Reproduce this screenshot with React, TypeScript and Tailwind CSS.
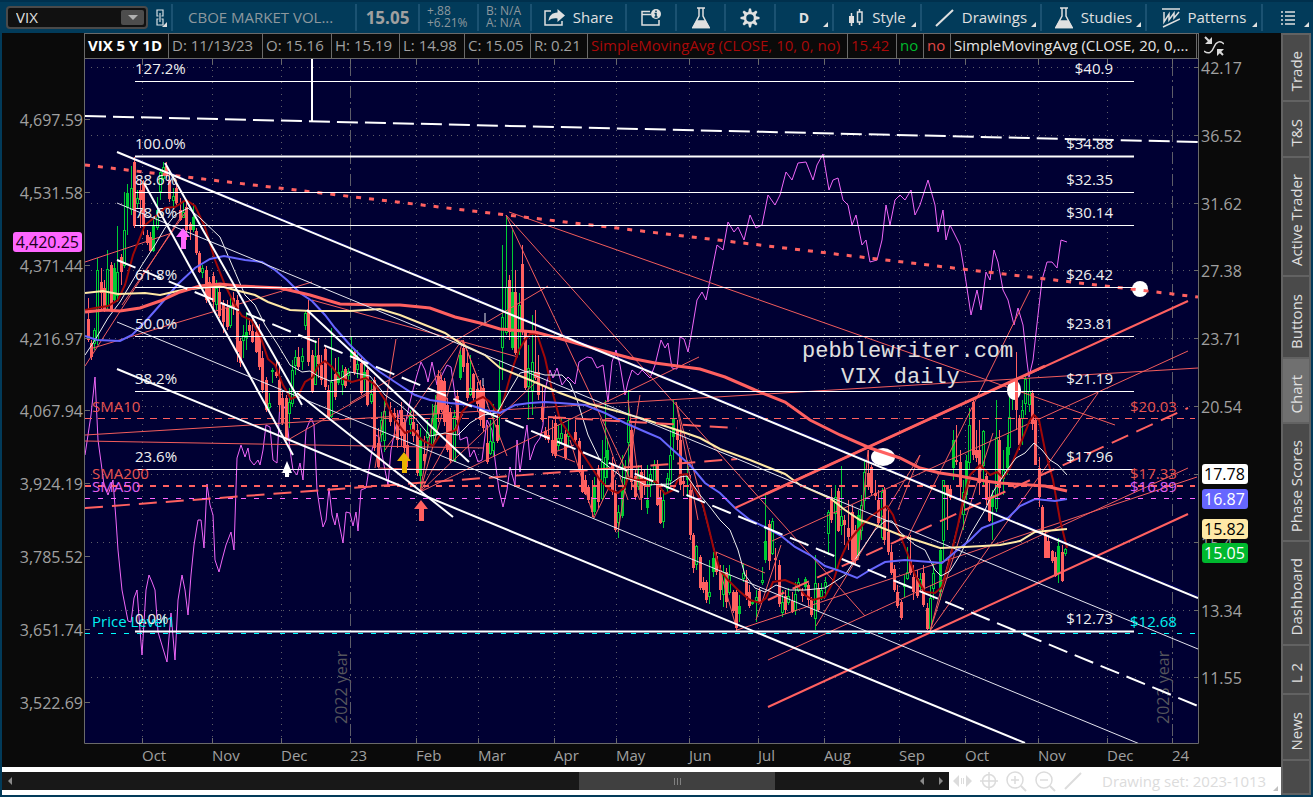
import { useState } from 'react'
import type { ReactNode } from 'react'
import clsx from 'clsx'

type Segment = [number, number, number, number]

const HEADER_CELLS = [
  { text: 'VIX 5 Y 1D', className: 'w-[84px] font-bold text-white' },
  { text: 'D: 11/13/23', className: 'w-[94px] text-[#a0a0a0]' },
  { text: 'O: 15.16', className: 'w-[69px] text-[#a0a0a0]' },
  { text: 'H: 15.19', className: 'w-[68px] text-[#a0a0a0]' },
  { text: 'L: 14.98', className: 'w-[65px] text-[#a0a0a0]' },
  { text: 'C: 15.05', className: 'w-[66px] text-[#a0a0a0]' },
  { text: 'R: 0.21', className: 'w-[57px] text-[#a0a0a0]' },
  { text: 'SimpleMovingAvg (CLOSE, 10, 0, no)', className: 'w-[260px] text-[#a90909]' },
  { text: '15.42', className: 'w-[49px] text-[#a90909]' },
  { text: 'no', className: 'w-[27px] text-[#00b82e]' },
  { text: 'no', className: 'w-[27px] text-[#e04848]' },
  { text: 'SimpleMovingAvg (CLOSE, 20, 0,...', className: 'w-[246px] text-[#e6e6e6]' },
]

const TABS = [
  { label: 'Trade', className: 'h-[65px]' },
  { label: 'T&S', className: 'h-[54px]' },
  { label: 'Active Trader', className: 'h-[117px]' },
  { label: 'Buttons', className: 'h-[80px]' },
  { label: 'Chart', className: 'h-[63px]' },
  { label: 'Phase Scores', className: 'h-[116px]' },
  { label: 'Dashboard', className: 'h-[102px]' },
  { label: 'L 2', className: 'h-[47px]' },
  { label: 'News', className: 'h-[64px]' },
]

const MONTHS: [number, string][] = [
  [142, 'Oct'], [212, 'Nov'], [281, 'Dec'], [350, '23'], [416, 'Feb'], [478, 'Mar'],
  [554, 'Apr'], [616, 'May'], [689, 'Jun'], [758, 'Jul'], [824, 'Aug'], [899, 'Sep'],
  [965, 'Oct'], [1038, 'Nov'], [1107, 'Dec'], [1172, '24'],
]

const LEFT_AXIS: [number, string][] = [
  [120, '4,697.59'], [193, '4,531.58'], [266, '4,371.44'], [339, '4,216.97'], [411, '4,067.94'],
  [484, '3,924.19'], [557, '3,785.52'], [630, '3,651.74'], [703, '3,522.69'],
]

const RIGHT_AXIS: [number, string][] = [
  [68, '42.17'], [136, '36.52'], [204, '31.62'], [271, '27.38'], [339, '23.71'], [407, '20.54'],
  [475, ''], [543, '15.4'], [611, '13.34'], [678, '11.55'],
]

const FIB_LEVELS: [number, string, string][] = [
  [81, '127.2%', '$40.9'], [156, '100.0%', '$34.88'], [192, '88.6%', '$32.35'],
  [225, '78.6%', '$30.14'], [287, '61.8%', '$26.42'], [336, '50.0%', '$23.81'],
  [391, '38.2%', '$21.19'], [469, '23.6%', '$17.96'], [631, '0.0%', '$12.73'],
]

const PRICE_BADGES = [
  { y: 464, text: '17.78', fill: '#ffffff', color: '#000000' },
  { y: 489, text: '16.87', fill: '#6666ff', color: '#ffffff' },
  { y: 519, text: '15.82', fill: '#ffe9a6', color: '#000000' },
  { y: 543, text: '15.05', fill: '#00b82e', color: '#ffffff' },
]

const THICK_WHITE: Segment[] = [
  [117, 152, 1198, 598], [117, 369, 1025, 743], [144, 183, 293, 455], [165, 163, 302, 405],
  [307, 310, 469, 462], [297, 393, 453, 517], [312, 59, 312, 121],
]

const THIN_WHITE: Segment[] = [
  [117, 203, 1198, 649], [117, 322, 1198, 768], [485, 313, 485, 323], [483, 378, 483, 386],
]

const THICK_RED: Segment[] = [
  [768, 707, 1188, 514], [735, 508, 1188, 301],
]

const THIN_RED: Segment[] = [
  [85, 435, 1198, 368], [85, 441, 484, 448], [85, 262, 172, 233], [93, 348, 312, 282],
  [85, 366, 180, 218], [122, 305, 187, 210], [509, 212, 1115, 425], [506, 215, 865, 616],
  [506, 215, 640, 500], [350, 403, 548, 286], [312, 300, 518, 357], [286, 441, 375, 390],
  [375, 468, 396, 339], [420, 492, 463, 340], [420, 492, 538, 380], [420, 492, 699, 357],
  [420, 492, 441, 372], [420, 492, 463, 414], [378, 468, 440, 470], [385, 450, 462, 340],
  [463, 340, 507, 456], [463, 340, 488, 405], [552, 453, 575, 462], [552, 453, 574, 445],
  [570, 440, 594, 518], [594, 518, 632, 440], [600, 418, 628, 500], [618, 532, 640, 395],
  [676, 402, 715, 553], [715, 553, 737, 630], [676, 402, 698, 520], [737, 630, 1197, 477],
  [816, 626, 920, 455], [768, 660, 1188, 468], [772, 541, 1188, 351], [930, 631, 993, 433],
  [930, 631, 1098, 393], [930, 631, 970, 480], [907, 539, 1030, 290], [716, 552, 765, 573],
  [756, 620, 781, 545], [858, 560, 868, 450], [898, 510, 920, 455], [628, 400, 641, 500],
]

const SMA_10 =
  '85,310 95,308 108,306 118,300 125,285 133,255 145,225 155,217 165,208 175,207 186,200 195,206 205,227 215,260 225,285 235,305 242,316 251,320 260,335 268,359 275,365 283,385 291,399 298,396 305,382 313,377 318,366 325,361 332,367 340,378 352,382 366,378 375,385 385,400 395,420 405,433 413,430 422,440 433,446 440,435 448,433 456,430 462,412 470,403 483,397 490,402 499,415 505,395 512,370 519,350 525,340 530,334 537,334 545,358 552,390 560,420 570,435 580,450 590,465 600,480 610,490 618,493 625,487 628,478 636,480 648,480 656,482 665,494 673,490 680,475 687,474 695,490 703,505 708,525 714,550 720,570 728,580 738,590 750,600 760,603 766,598 773,582 785,580 797,585 805,595 813,600 825,597 833,582 840,560 848,542 858,530 870,517 880,510 887,506 893,515 900,535 908,555 915,575 925,592 935,593 942,587 950,560 958,525 963,500 970,475 980,465 990,475 997,472 1003,478 1010,468 1020,445 1030,420 1034,415 1039,420 1045,450 1053,480 1060,520 1067,548'
const SMA_20 =
  '85,355 95,340 108,318 120,302 130,285 142,265 155,245 165,228 175,215 188,208 200,218 220,237 232,265 245,295 255,305 265,325 278,345 290,365 302,372 310,371 318,376 330,381 340,379 350,372 370,376 385,395 400,405 415,418 430,436 445,433 458,435 470,423 483,415 497,413 510,390 520,373 530,371 545,375 562,375 570,383 577,400 588,435 600,460 613,470 622,477 640,482 645,485 670,484 680,477 687,476 700,495 710,507 720,520 730,530 738,550 745,575 755,588 765,592 776,585 790,590 805,590 825,588 845,575 860,552 875,530 885,521 892,521 900,532 915,545 925,550 935,570 941,576 950,571 960,555 970,535 985,510 993,492 1007,470 1016,458 1025,453 1034,443 1042,450 1050,460 1058,465 1067,475'
const SMA_50 =
  '85,336 97,340 120,341 132,335 145,322 160,305 178,284 195,268 210,259 224,256 245,260 262,262 275,270 287,280 300,293 312,301 325,315 335,328 350,345 365,360 380,372 395,382 415,395 430,400 450,403 470,405 485,410 500,413 515,405 530,403 545,402 560,403 585,405 605,413 625,423 648,433 660,438 673,450 690,465 705,483 720,493 735,508 750,520 765,527 780,535 795,547 810,555 825,566 840,571 857,578 870,570 885,562 905,560 930,562 942,563 955,552 970,540 982,528 995,523 1008,518 1020,506 1035,499 1055,501 1067,499'
const SMA_100 =
  '85,293 103,291 118,294 145,293 160,295 182,290 200,288 220,286 235,290 255,295 268,302 290,310 310,311 330,311 350,311 380,309 400,315 425,325 445,333 463,345 485,355 500,368 530,380 560,393 590,404 620,412 650,421 680,431 700,438 720,449 750,460 785,474 800,485 830,498 845,510 860,520 875,525 900,535 925,543 940,548 965,547 1000,545 1020,541 1035,532 1067,529'
const SMA_200 =
  '85,312 105,310 120,311 140,308 160,301 180,292 200,286 220,284 240,286 280,288 310,295 340,304 380,305 400,305 430,308 455,317 480,323 500,329 535,332 565,340 600,350 630,358 655,363 700,369 725,377 755,390 785,402 810,420 840,435 870,448 900,458 920,468 940,473 960,476 985,481 1000,483 1030,485 1045,486 1067,491'
const SPX =
  '85,455 91,415 95,377 98,440 101,462 104,485 108,495 113,480 116,520 118,550 122,590 128,621 131,622 134,598 137,590 140,630 142,655 146,590 149,575 152,582 155,590 158,632 167,662 171,613 175,660 178,600 182,575 185,590 188,615 191,575 194,545 198,520 201,520 204,548 207,484 210,505 213,515 215,560 219,572 222,560 226,545 231,532 234,550 237,458 241,445 245,457 248,448 250,460 254,465 258,460 260,465 263,450 266,425 270,427 273,460 277,463 280,400 286,410 290,450 293,470 297,475 300,463 303,480 306,430 311,418 314,425 317,490 320,510 323,527 326,520 329,488 332,515 335,525 337,513 343,543 346,512 350,513 353,526 356,512 358,531 361,490 366,488 372,450 376,435 379,437 384,465 388,485 391,450 395,430 400,410 404,430 410,402 413,390 417,375 421,362 425,370 428,382 432,362 437,385 442,375 447,365 451,367 455,395 460,440 467,437 470,457 474,450 478,462 482,460 487,420 492,430 495,460 499,490 503,507 507,490 510,467 515,485 517,440 520,472 523,450 527,425 530,460 535,445 540,438 543,425 545,390 550,370 553,378 557,368 562,385 568,377 575,384 579,362 587,357 592,358 597,368 603,365 608,402 612,362 616,350 620,365 625,395 628,382 632,370 638,375 642,370 650,378 655,365 661,340 665,348 668,343 672,368 677,369 680,337 684,339 688,352 692,330 697,300 702,292 706,300 712,270 717,245 723,250 728,222 734,232 738,227 744,240 750,215 756,228 762,225 768,195 775,205 780,195 786,172 792,180 798,163 806,162 813,180 817,165 823,154 829,190 833,180 838,178 843,200 848,205 852,225 856,215 862,245 866,240 870,262 877,260 882,240 886,205 890,225 895,200 900,195 905,200 911,190 915,215 920,205 928,180 935,205 938,232 943,210 946,240 950,225 955,235 960,245 965,275 971,315 977,290 981,310 986,272 990,280 994,250 998,262 1003,290 1008,300 1014,325 1018,308 1023,325 1027,362 1029,377 1033,360 1038,315 1042,280 1047,262 1052,262 1057,268 1061,240 1067,242'

// direction (u/d) x high low bodyTop bodyBottom
const CANDLES = `d 88 298 342 319 340;d 91 340 360 343 357;u 94 328 350 330 343;u 97 258 345 270 340;d 101 268 310 282 293;d 104 280 312 288 310;u 107 250 310 269 305;d 111 262 312 265 310;u 114 263 303 268 300;u 117 226 302 272 295;d 121 254 285 257 272;u 124 192 268 230 265;u 127 184 235 193 208;u 131 166 215 188 209;d 134 157 228 162 226;u 137 190 208 198 203;d 140 180 228 190 200;d 143 180 235 183 226;d 147 230 245 235 243;d 150 232 252 237 251;u 153 218 252 225 251;u 157 197 230 210 227;u 160 170 200 172 191;u 163 162 182 167 178;d 166 162 178 166 176;d 169 172 202 180 199;u 173 188 208 196 200;d 176 180 205 188 203;d 180 198 221 210 220;u 183 202 218 212 217;d 186 202 240 207 230;d 190 222 240 224 230;u 193 205 232 217 230;d 196 228 255 231 253;d 199 251 273 253 272;u 202 265 278 268 272;d 206 266 303 270 300;d 209 277 305 282 300;d 213 272 310 276 302;u 216 280 310 288 304;d 219 284 318 292 316;d 223 300 333 303 322;d 227 300 330 308 327;u 230 297 328 305 325;d 233 292 315 298 308;d 237 295 362 300 352;d 240 338 367 341 363;u 243 325 358 335 340;u 246 312 350 332 338;d 249 318 335 325 331;d 252 318 343 331 342;d 256 322 353 332 352;d 259 324 370 333 367;d 262 351 393 358 390;d 266 377 412 380 410;u 269 393 410 403 407;u 272 368 383 370 372;d 276 360 378 372 376;d 279 362 412 380 405;d 282 392 425 398 423;d 286 395 441 398 438;u 289 388 428 402 413;u 292 360 407 370 403;u 295 350 375 357 365;d 298 347 370 357 367;u 302 348 370 356 361;u 305 310 330 313 325;d 308 300 366 312 362;d 312 350 393 355 392;u 315 340 385 356 384;d 318 338 378 355 364;d 321 355 385 365 380;d 325 345 390 349 387;d 328 385 419 390 418;u 331 328 418 382 416;d 335 358 400 374 397;u 338 357 385 372 383;u 342 365 395 371 384;d 345 367 388 369 386;u 348 368 380 371 375;u 351 337 358 350 356;d 354 350 375 352 373;u 357 350 378 364 369;d 361 357 395 363 393;u 364 365 392 372 380;d 367 367 406 370 405;u 371 380 404 394 401;d 374 377 451 380 448;d 378 428 468 443 467;u 381 412 442 420 434;u 384 400 452 411 440;d 390 402 426 410 422;d 394 408 438 413 418;d 397 410 448 420 440;d 401 402 446 410 436;d 404 418 452 422 448;d 407 430 467 445 458;u 410 410 434 416 424;d 413 410 442 422 436;d 417 424 476 430 473;u 420 428 490 440 476;d 424 436 466 454 461;u 427 420 450 432 437;u 432 404 446 418 444;u 435 395 440 405 436;d 438 370 422 376 414;d 441 375 412 380 410;d 444 378 426 381 422;d 447 398 452 405 450;d 450 408 463 412 461;u 454 410 462 416 460;d 457 390 434 396 420;u 460 350 380 355 378;d 463 340 372 348 367;d 467 350 401 363 398;u 470 355 396 388 394;d 473 373 402 374 398;d 477 382 412 389 404;d 480 380 426 390 420;d 483 385 432 388 428;d 487 425 464 443 462;u 490 420 455 441 453;u 493 404 456 442 450;d 497 410 443 425 441;u 499 360 440 390 412;u 502 245 380 317 347;u 506 215 335 287 332;d 509 275 340 280 332;u 512 230 350 292 348;d 515 270 355 292 353;u 519 293 355 305 348;d 522 245 335 264 331;d 525 330 390 332 388;u 528 345 420 368 386;u 532 315 415 362 390;d 535 310 380 372 378;d 538 355 400 372 395;d 542 385 422 407 420;d 545 427 440 431 438;d 548 418 443 435 440;d 552 420 456 440 453;d 555 415 458 423 456;u 558 425 450 438 445;u 561 418 443 433 438;d 565 430 460 434 458;u 568 418 445 433 436;d 575 420 442 432 440;d 579 438 473 441 472;d 582 465 493 471 492;d 585 475 495 480 494;d 588 485 503 487 500;d 592 480 517 497 512;u 594 477 515 486 512;d 598 465 508 470 502;u 602 440 500 462 498;u 605 400 486 457 477;u 607 438 478 450 460;d 612 457 495 463 492;d 615 480 532 492 530;u 618 505 538 512 522;u 622 455 518 490 516;u 625 460 490 478 484;u 628 390 480 420 442;d 631 425 490 430 482;d 635 470 500 476 497;u 638 465 490 476 486;d 641 465 510 472 498;d 644 470 495 480 486;u 647 465 514 500 508;u 650 468 497 474 485;u 654 460 485 464 482;d 657 460 506 465 505;d 660 490 524 497 523;u 663 490 528 500 521;u 667 473 492 478 488;u 670 430 487 455 480;u 673 400 460 418 437;d 677 420 450 430 440;d 680 425 490 440 485;d 683 475 496 481 484;u 687 460 497 476 480;d 690 475 540 490 535;d 693 533 573 535 568;u 696 545 570 546 564;d 700 555 590 557 588;d 703 577 593 582 590;d 706 580 603 582 600;u 709 560 604 592 596;u 713 552 577 558 572;d 716 552 575 556 572;d 720 565 600 570 590;u 723 565 607 572 594;d 726 568 608 572 602;u 729 565 595 575 592;d 733 590 613 592 611;d 736 590 632 592 628;u 739 595 622 606 614;u 743 563 582 573 578;d 746 570 600 580 596;d 749 585 608 592 606;u 752 600 605 602 604;u 756 590 622 597 600;d 759 588 604 591 602;u 762 567 585 580 582;u 765 495 563 541 560;d 769 520 570 524 561;u 772 518 555 521 553;d 775 548 580 558 560;d 779 560 607 565 604;u 782 590 617 602 612;d 785 590 614 596 610;u 788 588 605 596 602;d 792 592 613 601 612;u 795 582 615 594 610;u 798 578 592 582 590;d 802 588 602 592 596;u 805 577 590 579 587;d 808 583 606 585 600;d 811 597 617 600 615;u 815 555 630 583 618;d 818 583 612 588 610;u 821 583 600 590 596;u 825 577 596 582 586;u 828 510 555 512 533;d 831 488 523 497 520;u 835 485 570 497 513;d 838 488 532 491 531;u 841 466 535 516 525;d 844 515 545 520 525;d 848 500 550 528 537;d 852 505 562 512 560;d 855 525 565 530 560;u 858 510 558 515 556;u 861 495 540 505 530;u 864 460 510 472 500;d 868 450 490 473 487;d 871 465 495 467 493;d 875 480 500 493 496;d 878 490 525 500 523;u 882 488 540 492 537;d 884 487 545 490 540;d 888 510 555 532 552;d 891 545 575 552 573;d 894 565 592 569 590;d 897 585 608 592 606;d 901 600 620 602 618;u 904 575 597 584 586;u 907 547 580 572 578;d 910 535 575 560 573;d 913 565 600 577 592;d 917 570 598 578 596;u 920 573 590 579 586;d 923 565 607 573 605;d 927 603 630 608 629;u 930 585 632 598 628;u 933 563 600 573 588;u 940 548 600 550 592;u 943 480 560 480 540;d 947 485 530 487 495;d 950 485 500 489 498;u 953 430 480 440 468;d 956 425 465 460 462;d 960 450 500 462 487;u 963 480 530 492 514;u 966 455 500 461 495;u 969 408 470 425 462;d 973 398 460 402 455;d 976 430 462 450 458;d 979 420 495 450 483;u 983 430 485 431 465;d 986 470 505 476 500;d 989 480 522 497 521;u 992 490 540 495 507;u 996 400 512 437 508;d 999 430 493 440 488;u 1003 450 495 470 478;u 1007 435 475 447 468;u 1009 385 455 417 447;u 1012 380 410 390 398;d 1016 352 430 378 410;d 1019 415 450 418 445;u 1022 400 445 410 418;u 1025 375 415 379 403;u 1029 378 412 391 404;d 1032 390 430 393 424;d 1035 415 465 420 465;d 1039 457 507 468 497;d 1042 505 535 507 530;d 1045 530 558 535 558;d 1048 535 558 541 558;d 1052 550 563 551 561;d 1055 552 577 557 576;u 1058 538 583 546 574;d 1062 545 582 552 581;u 1065 548 556 549 553`

const candles = CANDLES.split(';').map((row) => {
  const [dir, ...rest] = row.split(' ')
  const [x, high, low, top, bottom] = rest.map(Number)
  return { up: dir === 'u', x, high, low, top, bottom }
})

function Lines({ segments }: { segments: Segment[] }): React.JSX.Element {
  return (
    <>
      {segments.map(([x1, y1, x2, y2], i) => (
        <line key={i} x1={x1} y1={y1} x2={x2} y2={y2} />
      ))}
    </>
  )
}

function UpArrow({ x, y, fill }: { x: number; y: number; fill: string }): React.JSX.Element {
  return <path transform={`translate(${x} ${y})`} d="M0 0l7 9h-4v12h-5v-12h-5z" fill={fill} />
}

function PriceChart(): React.JSX.Element {
  return (
    <svg viewBox="2 59 1279 708" className="block w-full text-[15px]" role="img" aria-label="VIX daily chart">
      <defs>
        <clipPath id="plot">
          <rect x="85" y="59" width="1113" height="684" />
        </clipPath>
      </defs>
      <rect x="85" y="59" width="1113" height="684" fill="#000033" />

      <g stroke="#5d5d68" strokeDasharray="1 5">
        {MONTHS.map(([x]) => (
          <line key={x} x1={x + 0.5} x2={x + 0.5} y1="64" y2="738" strokeDasharray={x === 350 || x === 1172 ? '12 4 2 4' : undefined} />
        ))}
        {RIGHT_AXIS.map(([y]) => (
          <line key={y} x1="91" x2="1194" y1={y - 0.5} y2={y - 0.5} />
        ))}
      </g>
      <g fill="#55555c" className="text-[16px]">
        <text transform="translate(347 724) rotate(-90)">2022 year</text>
        <text transform="translate(1169 724) rotate(-90)">2023 year</text>
      </g>

      <g clipPath="url(#plot)" fill="none">
        <line x1="135" y1="158" x2="1198" y2="596" stroke="#000066" strokeDasharray="22 8" />
        <polyline points={SPX} stroke="#f066f8" />

        <g shapeRendering="crispEdges">
          {candles.map(({ up, x, high, low, top, bottom }, i) => {
            const color = up ? '#00cc33' : '#ff6060'
            const filled = !up || i % 4 === 0
            return (
              <g key={x}>
                <rect x={x} y={high} width="1" height={low - high} fill={color} />
                <rect
                  x={filled ? x - 1 : x - 0.5}
                  y={top}
                  width={filled ? 3 : 2}
                  height={Math.max(bottom - top, 1)}
                  fill={filled ? color : '#000033'}
                  stroke={filled ? 'none' : color}
                />
              </g>
            )
          })}
        </g>

        <g stroke="#f25c5c">
          <Lines segments={THIN_RED} />
        </g>
        <polyline points={SMA_10} stroke="#a00808" strokeWidth="2" />
        <polyline points={SMA_20} stroke="#f0f0f0" />
        <polyline points={SMA_50} stroke="#6666ff" strokeWidth="2" />
        <polyline points={SMA_100} stroke="#ffe9a6" strokeWidth="2" />
        <ellipse cx="883" cy="457" rx="12" ry="9" fill="#ffffff" />
        <ellipse cx="1014" cy="390" rx="7" ry="10" fill="#ffffff" />
        <circle cx="1140" cy="289" r="8" fill="#ffffff" />
        <rect x="1016" y="352" width="1" height="78" fill="#ff6060" />
        <rect x="1015" y="378" width="3" height="32" fill="#ff6060" />
        <polyline points={SMA_200} stroke="#ff6060" strokeWidth="3" />

        <g stroke="#ff6060" strokeWidth="2">
          <Lines segments={THICK_RED} />
          <line x1="766" y1="494" x2="1045" y2="366" strokeWidth="3" />
          <g strokeDasharray="18 9">
            <line x1="85" y1="508" x2="737" y2="459" />
            <line x1="548" y1="417" x2="737" y2="428" />
            <line x1="768" y1="600" x2="1188" y2="408" />
          </g>
          <line x1="85" y1="165" x2="1198" y2="297" strokeWidth="3" strokeDasharray="5 8" />
          <line x1="85" y1="486" x2="1195" y2="486" strokeDasharray="6 7" />
          <line x1="85" y1="418.500" x2="1195" y2="418.500" strokeWidth="1" strokeDasharray="7 6" />
          <line x1="85" y1="498.500" x2="1195" y2="498.500" stroke="#ff66ff" strokeWidth="1" strokeDasharray="5 8" />
          <line x1="85" y1="633.500" x2="1195" y2="633.500" stroke="#00ffff" strokeWidth="1" strokeDasharray="5 8" />
        </g>

        <g stroke="#e4e4ee">
          <Lines segments={THIN_WHITE} />
        </g>
        <g stroke="#ffffff" strokeWidth="2">
          <Lines segments={THICK_WHITE} />
          <line x1="117" y1="260" x2="1198" y2="706" strokeDasharray="20 8" />
          <line x1="85" y1="116" x2="1198" y2="142" strokeDasharray="21 7" />
        </g>
        <g stroke="#ffffff">
          {FIB_LEVELS.map(([y]) => (
            <line key={y} x1="135" x2="1134" y1={y + 0.5} y2={y + 0.5} strokeWidth={y === 156 || y === 631 ? 2 : 1} />
          ))}
        </g>
      </g>

      <UpArrow x={183} y={228} fill="#ff66ff" />
      <UpArrow x={404} y={452} fill="#e8b400" />
      <UpArrow x={421} y={500} fill="#ff6060" />
      <path d="M287 461l5 12h-3v4h-4v-4h-3z" fill="#ffffff" />

      <g fill="#e8544f">
        <text x="92" y="412">SMA10</text>
        <text x="92" y="479">SMA200</text>
        <text x="1130" y="412">$20.03</text>
        <text x="1130" y="479">$17.33</text>
      </g>
      <g fill="#e060f0">
        <text x="92" y="492">SMA50</text>
        <text x="1130" y="492">$16.89</text>
      </g>
      <g fill="#00f0f0">
        <text x="92" y="627">Price Level1</text>
        <text x="1130" y="627">$12.68</text>
      </g>
      <g fill="#f0f0f0">
        {FIB_LEVELS.map(([y, percent, price]) => (
          <g key={y}>
            <text x="135" y={y - 7}>{percent}</text>
            <text x="1113" y={y - 7} textAnchor="end">{price}</text>
          </g>
        ))}
      </g>
      <g fill="#e0e0e0" className="font-['Liberation_Mono',monospace] text-[22px]">
        <text x="802" y="357">pebblewriter.com</text>
        <text x="841" y="383">VIX daily</text>
      </g>

      <g stroke="#6a6a6a">
        <path d="M84.500 59V743.500H1198.500V59" fill="none" />
        {MONTHS.map(([x]) => (
          <path key={x} d={`M${x + 0.5} 59v5M${x + 0.5} 738v5`} />
        ))}
        {LEFT_AXIS.map(([y]) => (
          <path key={y} d={`M85 ${y - 0.5}h5`} />
        ))}
        {RIGHT_AXIS.map(([y]) => (
          <path key={y} d={`M1194 ${y - 0.5}h5`} />
        ))}
      </g>

      <g fill="#a0a0a0">
        <g className="text-[16px]">
          {LEFT_AXIS.map(([y, label]) => (
            <text key={y} x="83" y={y + 6} textAnchor="end">{label}</text>
          ))}
          {RIGHT_AXIS.map(([y, label]) => (
            <text key={y} x="1201" y={y + 6}>{label}</text>
          ))}
        </g>
        {MONTHS.map(([x, label]) => (
          <text key={x} x={x} y="761">{label}</text>
        ))}
      </g>

      <g className="text-[16px]">
        <rect x="13" y="232" width="69" height="20" rx="3" fill="#ff66ff" />
        <text x="79" y="248" textAnchor="end" fill="#1a001a">4,420.25</text>
        {PRICE_BADGES.map(({ y, text, fill, color }) => (
          <g key={text}>
            <rect x="1202" y={y} width="46" height="20" rx="3" fill={fill} />
            <text x="1204" y={y + 16} fill={color}>{text}</text>
          </g>
        ))}
      </g>
    </svg>
  )
}

function Corner(): React.JSX.Element {
  return (
    <svg viewBox="0 0 5 5" className="absolute right-1 bottom-1 size-[5px] fill-[#e0e0e0]">
      <path d="M5 0v5h-5z" />
    </svg>
  )
}

function ToolButton({
  className,
  label,
  menu,
  children,
}: {
  className: string
  label: string
  menu?: boolean
  children: ReactNode
}): React.JSX.Element {
  return (
    <button
      type="button"
      aria-label={label}
      className={clsx(
        'relative flex h-[27px] shrink-0 items-center justify-center gap-2 border-l-2 border-[#1b5272]',
        className
      )}
    >
      {children}
      {menu && <Corner />}
    </button>
  )
}

function FlaskIcon(): React.JSX.Element {
  return (
    <svg viewBox="0 0 18 22" className="h-[22px] w-[18px] shrink-0" fill="none" stroke="#e0e0e0" strokeWidth="1.500">
      <path d="M5 1h8M7 1v8L1 20.500h16L11 9V1" />
      <path d="M5 14h8l4 6.500H1z" fill="#e0e0e0" />
    </svg>
  )
}

function Toolbar(): React.JSX.Element {
  const [symbol, setSymbol] = useState('VIX')

  return (
    <div className="flex h-[33px] items-center overflow-hidden border-t-2 border-[#00304d] pl-[6px]">
      <div className="flex h-[23px] w-[142px] shrink-0 items-center rounded border-2 border-[#4a4a4a] bg-[#111111] pr-[2px] pl-2">
        <input
          aria-label="Symbol"
          value={symbol}
          onChange={(e) => setSymbol(e.target.value)}
          className="min-w-0 flex-1 bg-transparent text-[15px] text-[#e0e0e0] outline-none"
        />
        <button
          type="button"
          aria-label="Choose symbol"
          className="flex h-[15px] w-[23px] items-center justify-center rounded-xs bg-[#4d4d4d]"
        >
          <svg viewBox="0 0 10 5" className="h-[5px] w-[10px] fill-[#b0b0b0]">
            <path d="M0 0h10l-5 5z" />
          </svg>
        </button>
      </div>
      <button type="button" aria-label="Link" className="relative flex h-[27px] w-[23px] shrink-0 items-center justify-center">
        <svg viewBox="0 0 8 17" className="h-[17px] w-2" fill="none" stroke="#d8e0e4" strokeWidth="1.200">
          <path d="M2.500 7H1V1h6v6H5.500M2.500 10H1v6h6v-6H5.500M4 4v9" />
        </svg>
        <Corner />
      </button>

      <div className="flex h-[27px] w-[184px] shrink-0 items-center border-l-2 border-[#1b5272] pl-[15px] text-[15px] text-[#8d989e]">
        CBOE MARKET VOL...
      </div>
      <div className="flex h-[27px] w-[63px] shrink-0 items-center justify-center border-l-2 border-[#1b5272] text-[17px] font-bold text-[#a0a0a0]">
        15.05
      </div>
      <div className="h-[27px] w-[59px] shrink-0 border-l-2 border-[#1b5272] pt-px pl-[7px] text-[12px] leading-[12px] text-[#8d989e]">
        +.88
        <br />
        +6.21%
      </div>
      <div className="h-[27px] w-[53px] shrink-0 border-l-2 border-[#1b5272] pt-px pl-[7px] text-[12px] leading-[12px] whitespace-nowrap text-[#8d989e]">
        B: N/A
        <br />
        A: N/A
      </div>

      <ToolButton className="w-[95px]" label="Share">
        <svg viewBox="0 0 21 17" className="h-[17px] w-[21px]" fill="none" stroke="#e0e0e0" strokeWidth="1.500">
          <path d="M7 2H1v14h17v-4" />
          <path d="M21 6.500L13.500 0v3.500C8 3.500 5 7 4.500 12 7 9.500 10 9 13.500 9.500V13z" fill="#e0e0e0" stroke="none" />
        </svg>
        <span>Share</span>
      </ToolButton>
      <ToolButton className="w-[50px]" label="Company info">
        <svg viewBox="0 0 20 17" className="h-[17px] w-5" fill="none" stroke="#e0e0e0" strokeWidth="1.500">
          <path d="M9 2.500H1v13.500h17V11M1 5.500h9" />
          <circle cx="15" cy="5" r="5" fill="#e0e0e0" stroke="none" />
          <path d="M15 1.500v1.500M13.500 4.500H15v3.500M13.500 8h3" stroke="#023b5a" />
        </svg>
      </ToolButton>
      <ToolButton className="w-[49px]" label="Lab">
        <FlaskIcon />
      </ToolButton>
      <ToolButton className="w-[50px]" label="Settings">
        <svg viewBox="-10 -10 20 20" className="size-5" fill="none" stroke="#e0e0e0">
          <circle r="5" strokeWidth="2.500" />
          {[0, 45, 90, 135, 180, 225, 270, 315].map((angle) => (
            <path key={angle} transform={`rotate(${angle})`} d="M-1-9.500h2l1 4.500h-4z" fill="#e0e0e0" stroke="none" />
          ))}
        </svg>
      </ToolButton>
      <ToolButton className="w-[58px] text-[14px] font-bold" label="Aggregation period: day" menu>
        D
      </ToolButton>
      <ToolButton className="w-[88px]" label="Style" menu>
        <svg viewBox="0 0 16 18" className="h-[18px] w-4" fill="none" stroke="#e0e0e0" strokeWidth="1.500">
          <path d="M3.500 4v13M11.500 0v3M11.500 13v3" />
          <rect x="1" y="7" width="5" height="7" fill="#e0e0e0" stroke="none" />
          <rect x="9.500" y="3" width="4.500" height="10" />
        </svg>
        <span>Style</span>
      </ToolButton>
      <ToolButton className="w-[120px]" label="Drawings" menu>
        <svg viewBox="0 0 19 18" className="h-[18px] w-[19px]" stroke="#e0e0e0" strokeWidth="2">
          <path d="M1 17L18 1" />
        </svg>
        <span>Drawings</span>
      </ToolButton>
      <ToolButton className="w-[105px]" label="Studies" menu>
        <FlaskIcon />
        <span>Studies</span>
      </ToolButton>
      <ToolButton className="w-[116px]" label="Patterns" menu>
        <svg viewBox="0 0 18 20" className="h-5 w-[18px]" fill="none" stroke="#e0e0e0" strokeWidth="1.500">
          <path d="M0 1h18M1 19l17-8M2 4v10l5-8v6l5-7v5l5-6" />
        </svg>
        <span>Patterns</span>
      </ToolButton>
      <ToolButton className="min-w-[48px] flex-1" label="More" menu>
        <svg viewBox="0 0 14 14" className="size-[14px]" stroke="#e0e0e0" strokeWidth="1.500">
          <path d="M0 1h2M4 1h10M0 5h2M4 5h10M0 9h2M4 9h10M0 13h2M4 13h10" />
        </svg>
      </ToolButton>
    </div>
  )
}

function ChartHeader(): React.JSX.Element {
  return (
    <div className="flex h-[26px] overflow-hidden pl-[82px] text-[15px]">
      <div className="flex border-y border-l border-[#6a6a6a]">
        {HEADER_CELLS.map(({ text, className }, i) => (
          <div
            key={i}
            className={clsx('shrink-0 border-r border-[#6a6a6a] pl-[3px] leading-[22px] whitespace-nowrap', className)}
          >
            {text}
          </div>
        ))}
        <div className="w-[2px] border-r border-[#6a6a6a]" />
      </div>
      <button type="button" aria-label="Fit chart" className="ml-[5px]">
        <svg viewBox="0 0 20 20" className="size-5" fill="none" stroke="#d8d8d8" strokeWidth="1.500">
          <path d="M0 15c5 4 8 1 10-4s6-7 10-3" />
          <path d="M1 1l6 6M19 19l-5-5" strokeWidth="2" />
          <path d="M8 1v7H1zM13 20v-7h7z" fill="#d8d8d8" stroke="none" />
        </svg>
      </button>
    </div>
  )
}

function BottomBar(): React.JSX.Element {
  return (
    <div className="flex h-7 items-center bg-white">
      <div className="flex h-[18px] flex-1 items-center bg-[#181818]">
        <button type="button" aria-label="Scroll left" className="flex h-full flex-1 items-center pl-[6px]">
          <svg viewBox="0 0 4 8" className="h-2 w-1 fill-[#8a8a8a]">
            <path d="M4 0v8L0 4z" />
          </svg>
        </button>
        <div className="flex h-full w-[196px] items-center justify-center gap-[2px] bg-[#404040]">
          <span className="h-[7px] w-px bg-[#808080]" />
          <span className="h-[7px] w-px bg-[#808080]" />
          <span className="h-[7px] w-px bg-[#808080]" />
        </div>
        <div className="flex w-[174px] items-center justify-end gap-[15px] pr-[6px]">
          <button type="button" aria-label="Step left">
            <svg viewBox="0 0 4 8" className="h-2 w-1 fill-[#8a8a8a]">
              <path d="M4 0v8L0 4z" />
            </svg>
          </button>
          <button type="button" aria-label="Step right">
            <svg viewBox="0 0 4 8" className="h-2 w-1 fill-[#8a8a8a]">
              <path d="M0 0v8l4-4z" />
            </svg>
          </button>
        </div>
      </div>
      <div className="flex w-[332px] shrink-0 items-center gap-2 pl-1 text-[15px] text-[#dcdcdc]">
        <button type="button" aria-label="Expand">
          <svg viewBox="0 0 19 12" className="block h-3 w-[19px]" fill="#dcdcdc">
            <path d="M6 0v12L0 6zM13 0v12l6-6zM8 3h1v6H8zM10 3h1v6h-1z" />
          </svg>
        </button>
        <button type="button" aria-label="Crosshair">
          <svg viewBox="0 0 18 18" className="block size-[18px]" fill="none" stroke="#dcdcdc" strokeWidth="1.500">
            <circle cx="9" cy="9" r="6.500" />
            <path d="M9 0v18M0 9h18" />
          </svg>
        </button>
        <button type="button" aria-label="Zoom in">
          <svg viewBox="0 0 21 21" className="block size-[21px]" fill="none" stroke="#dcdcdc" strokeWidth="1.500">
            <circle cx="9" cy="9" r="8" />
            <path d="M5 9h8M9 5v8" />
            <path d="M15 15l5 5" strokeWidth="2" />
          </svg>
        </button>
        <button type="button" aria-label="Zoom out">
          <svg viewBox="0 0 21 21" className="block size-[21px]" fill="none" stroke="#dcdcdc" strokeWidth="1.500">
            <circle cx="9" cy="9" r="8" />
            <path d="M5 9h8" />
            <path d="M15 15l5 5" strokeWidth="2" />
          </svg>
        </button>
        <button type="button" aria-label="Draw line">
          <svg viewBox="0 0 18 18" className="block size-[18px]" stroke="#dcdcdc" strokeWidth="2">
            <path d="M1 17L17 1" />
          </svg>
        </button>
        <button type="button" className="relative h-7 flex-1 pl-3 text-left whitespace-nowrap">
          Drawing set: 2023-1013
          <svg viewBox="0 0 5 5" className="absolute right-[3px] bottom-1 size-[5px] fill-[#c0c0c0]">
            <path d="M5 0v5h-5z" />
          </svg>
        </button>
      </div>
    </div>
  )
}

export default function App(): React.JSX.Element {
  const [activeTab, setActiveTab] = useState('Chart')

  return (
    <div className="bg-[#023b5a] pb-[2px] font-['Open_Sans','Noto_Sans',sans-serif] text-[15px] text-[#e0e0e0]">
      <Toolbar />
      <div className="flex px-[2px]">
        <main className="min-w-0 flex-1 bg-[#0a0a0a]">
          <ChartHeader />
          <PriceChart />
          <BottomBar />
        </main>
        <nav className="flex w-[30px] shrink-0 flex-col gap-[2px] bg-[#626262] p-[2px]">
          {TABS.map(({ label, className }) => (
            <button
              key={label}
              type="button"
              onClick={() => setActiveTab(label)}
              className={clsx(
                'flex items-center justify-center pt-2 text-[15px]',
                label === activeTab ? 'bg-[#707070]' : 'bg-[#4a4a4a]',
                className
              )}
            >
              <span className="rotate-180 whitespace-nowrap [writing-mode:vertical-rl]">{label}</span>
            </button>
          ))}
          <div className="flex-1 bg-[#4a4a4a]" />
        </nav>
      </div>
    </div>
  )
}
